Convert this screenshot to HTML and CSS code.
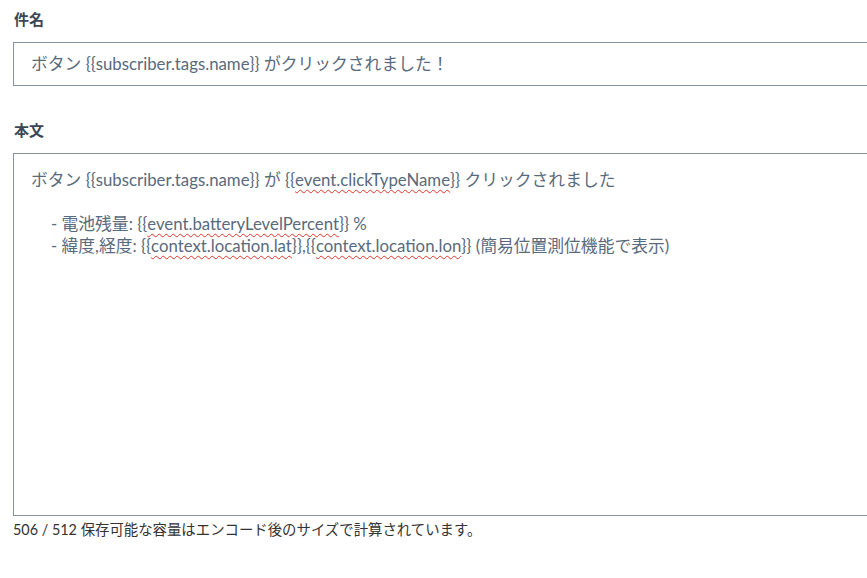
FILE: index.html
```html
<!DOCTYPE html>
<html lang="ja">
<head>
<meta charset="utf-8">
<link rel="stylesheet" href="styles.css">
</head>
<body>
<form class="form">
  <div class="field">
    <label class="label">件名</label>
    <div class="control input">ボタン {{subscriber.tags.name}} がクリックされました！</div>
  </div>
  <div class="field body-field">
    <label class="label">本文</label>
    <div class="control textarea">
      <div class="line">ボタン {{subscriber.tags.name}} が {{<span class="sp">event.clickTypeName</span>}} クリックされました</div>
      <div class="line blank">&nbsp;</div>
      <div class="line indent">- 電池残量: {{<span class="sp">event.batteryLevelPercent</span>}} %</div>
      <div class="line indent">- 緯度,経度: {{<span class="sp">context.location.lat</span>}},{{<span class="sp">context.location.lon</span>}} (簡易位置測位機能で表示)</div>
    </div>
    <p class="help">506 / 512 保存可能な容量はエンコード後のサイズで計算されています。</p>
  </div>
</form>
</body>
</html>
```

FILE: styles.css
```css
html, body {
  margin: 0;
  padding: 0;
  background: #ffffff;
  overflow: hidden;
}
body {
  font-family: "Lato", "Noto Sans CJK JP", sans-serif;
  width: 867px;
  height: 578px;
}
.form {
  padding: 10px 0 0 13px;
  width: 1000px;
  display: flex;
  flex-direction: column;
}
.field {
  display: flex;
  flex-direction: column;
}
.label {
  font-family: "Noto Sans CJK JP", sans-serif;
  font-weight: 700;
  font-size: 15px;
  line-height: 18px;
  color: #3b4756;
  padding-left: 1px;
  margin-bottom: 14px;
}
.control {
  border: 1px solid #88929b;
  color: #5a6a7d;
  font-size: 16.8px;
  box-sizing: border-box;
  width: 960px;
}
.input {
  height: 44px;
  line-height: 42px;
  padding: 0 17px;
}
.body-field {
  margin-top: 35px;
}
.textarea {
  height: 363px;
  padding: 15px 17px;
}
.line {
  line-height: 22px;
  height: 22px;
  white-space: nowrap;
}
.indent {
  padding-left: 20px;
}
.sp {
  text-decoration: underline wavy #e0352b;
  text-decoration-thickness: 1px;
  text-underline-offset: 3px;
}
.help {
  margin: 4px 0 0 0;
  font-size: 14.4px;
  line-height: 20px;
  color: #333333;
}
```
